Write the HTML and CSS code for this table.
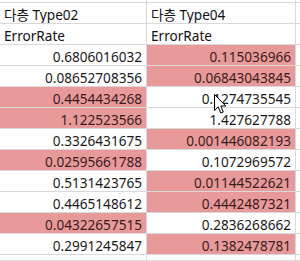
FILE: index.html
```html
<!DOCTYPE html>
<html lang="ko">
<head>
<meta charset="utf-8">
<link rel="stylesheet" href="styles.css">
</head>
<body>
<div class="sheet">
  <div class="c"></div><div class="c"></div><div class="c"></div>
  <div class="c h">다층 Type02</div><div class="c h">다층 Type04</div><div class="c"></div>
  <div class="c h">ErrorRate</div><div class="c h">ErrorRate</div><div class="c"></div>
  <div class="c n">0.6806016032</div><div class="c n p">0.115036966</div><div class="c"></div>
  <div class="c n">0.08652708356</div><div class="c n p">0.06843043845</div><div class="c"></div>
  <div class="c n p">0.4454434268</div><div class="c n">0.1274735545</div><div class="c"></div>
  <div class="c n p">1.122523566</div><div class="c n">1.427627788</div><div class="c"></div>
  <div class="c n">0.3326431675</div><div class="c n p">0.001446082193</div><div class="c"></div>
  <div class="c n p">0.02595661788</div><div class="c n">0.1072969572</div><div class="c"></div>
  <div class="c n">0.5131423765</div><div class="c n p">0.01144522621</div><div class="c"></div>
  <div class="c n">0.4465148612</div><div class="c n p">0.4442487321</div><div class="c"></div>
  <div class="c n p">0.04322657515</div><div class="c n">0.2836268662</div><div class="c"></div>
  <div class="c n">0.2991245847</div><div class="c n p">0.1382478781</div><div class="c"></div>
  <div class="c"></div><div class="c"></div><div class="c"></div>
</div>
<svg class="cursor" width="13" height="21" viewBox="0 0 13 21">
  <path d="M0.5 0.5 L0.5 16.5 L4.2 12.8 L6.8 19 L9.3 18 L6.8 12 L11.8 12 Z" fill="#fff" stroke="#000" stroke-width="1" stroke-linejoin="miter"/>
</svg>
</body>
</html>
```
FILE: styles.css
```css
html, body {
  margin: 0;
  padding: 0;
  background: #fff;
  overflow: hidden;
}
body {
  position: relative;
  width: 300px;
  height: 261px;
}
.sheet {
  display: grid;
  grid-template-columns: 147px 149px 1fr;
  grid-template-rows: 3px repeat(12, 21px) 1fr;
  height: 261px;
  font-family: "Noto Sans", "Noto Sans CJK KR", sans-serif;
  font-size: 13.6px;
  color: #1a1a1a;
}
.c {
  box-sizing: border-box;
  border-right: 1px solid #d9d9d9;
  border-bottom: 1px solid #d9d9d9;
  padding: 2px 4px 0 4px;
  line-height: 19px;
  white-space: nowrap;
  overflow: hidden;
}
.h {
  text-align: left;
  padding-left: 4px;
  color: #111;
}
.n {
  text-align: right;
}
.p {
  background: #e89a9b;
  color: #3a1c1c;
}
.cursor {
  position: absolute;
  left: 214px;
  top: 94px;
}
```
